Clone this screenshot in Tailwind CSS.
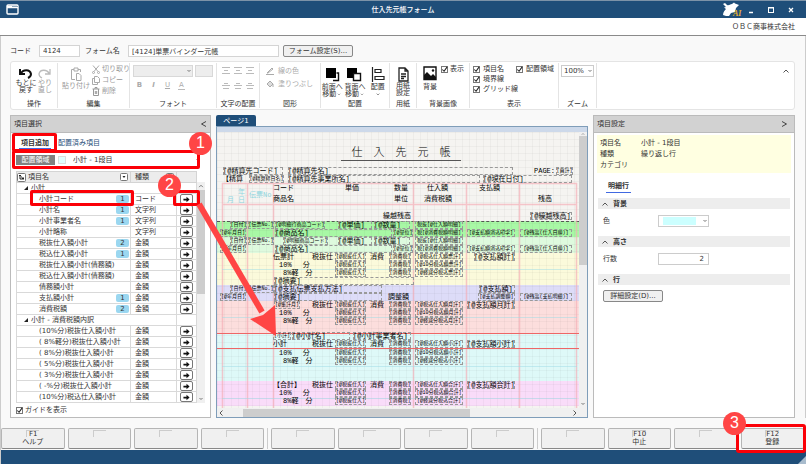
<!DOCTYPE html>
<html lang="ja">
<head>
    <meta charset="UTF-8">
    <meta name="viewport" content="width=device-width, initial-scale=1.0">
    <title>仕入先元帳フォーム</title>
    <script src="https://cdn.jsdelivr.net/npm/@tailwindcss/browser@4"></script>
</head>
<body class="min-h-screen relative flex flex-col overflow-hidden bg-[#f9f9f9] text-[#333] text-[7px] leading-[10px] font-['DejaVu_Sans','Noto_Sans_CJK_JP',sans-serif]">

<!-- icons -->
<svg class="hidden">
    <symbol id="chev" viewBox="0 0 8 8"><path d="M2.500 3l1.500 1.500L5.500 3" fill="none" stroke="#777" stroke-width="1"/></symbol>
    <symbol id="up" viewBox="0 0 8 8"><path d="M1.500 5.500L4 3l2.500 2.500" fill="none" stroke="#555" stroke-width="1"/></symbol>
    <symbol id="tick" viewBox="0 0 8 8"><path d="M1.500 4l2 2 3.500-5" fill="none" stroke="#222" stroke-width="1.200"/></symbol>
    <symbol id="arrow" viewBox="0 0 8 8"><path d="M0.500 3h3.500V0.800L7.500 4 4 7.200V5H0.500z" fill="#111"/></symbol>
    <symbol id="lines-c" viewBox="0 0 8 7"><path d="M0 .5h8M2 3.500h4M0 6.500h8" stroke="#bbb"/></symbol>
    <symbol id="lines-b" viewBox="0 0 8 7"><path d="M2 1.500h4M0 3.500h8M1 6.500h6" stroke="#bbb"/></symbol>
</svg>

<header>
    <div class="h-[18px] grid grid-cols-[1fr_auto_1fr] items-center bg-[#1f4e79] border-t border-[#7d93a8] text-white px-1.5">
        <svg class="w-[13px] h-[11px]" viewBox="0 0 13 11"><rect x="1" y="1" width="11" height="9" rx="1" fill="none" stroke="#fff" stroke-width="1.400"/><path d="M1 3h11" stroke="#fff" stroke-width="2.500"/><path d="M6.500 2.500h1M8.500 2.500h1M10.500 2.500h1" stroke="#1f4e79"/></svg>
        <h1 class="font-medium">仕入先元帳フォーム</h1>
        <div class="flex items-center justify-end gap-1.5 pr-0.5">
            <svg class="w-[20px] h-[15px]" viewBox="0 0 20 15"><path d="M1 13c0-3 2-5 3-6L2 5.500 4 5l-3-3 2-1 2 2c2 1 3-1 5-1l2-1.500 1 1 4 1.500-2 2-1 1-1 4-4 1-2 3-3 0z" fill="#fff"/><text x="11" y="14" font-size="8" font-style="italic" font-weight="bold" fill="#e8b030" font-family="Liberation Serif">AI</text></svg>
            <button class="w-[10px] h-3" aria-label="最小化"><svg viewBox="0 0 10 12"><path d="M1 8.500h4" stroke="#fff" stroke-width="1.500"/></svg></button>
            <button class="w-[14px] h-3 flex justify-center" aria-label="最大化"><svg class="w-[8px]" viewBox="0 0 8 12"><rect x="1.500" y="3.500" width="5" height="5" fill="none" stroke="#fff"/><path d="M1 4h6" stroke="#fff"/></svg></button>
            <button class="w-[14px] h-3 flex justify-center" aria-label="閉じる"><svg class="w-[8px]" viewBox="0 0 8 12"><path d="M2 4l4 4M6 4L2 8" stroke="#fff" stroke-width="1.300"/></svg></button>
        </div>
    </div>
    <div class="h-[18px] flex items-center justify-end bg-white border-b border-[#8a8a8a] pr-[11px]">ＯＢＣ商事株式会社</div>
</header>

<main class="flex-1 flex flex-col border-x border-[#ccc] pl-[9px] pr-[10px] pt-[9px]">
    <form class="flex items-center h-3 mb-1">
        <label for="code" class="w-[29px]">コード</label>
        <input id="code" value="4124" class="w-[41px] h-3 bg-white border border-[#d4d4d4] px-[3px]">
        <label for="form-name" class="w-[48px] pl-[5px]">フォーム名</label>
        <input id="form-name" value="[4124]単票バインダー元帳" class="w-[151px] h-3 bg-white border border-[#d4d4d4] px-[3px]">
        <button type="button" class="ml-1 w-[70px] h-3 leading-[9px] bg-[#f0f0f0] border border-[#888] rounded-[2px] whitespace-nowrap">フォーム設定(S)...</button>
    </form>

    <!-- ribbon -->
    <section class="flex bg-white border border-[#e4e4e4] rounded-[3px] h-[49px] mb-[5px] py-px text-center leading-[7px]">
        <div class="w-[47px] flex flex-col justify-between border-r border-[#e4e4e4] pt-1">
            <div class="flex justify-around px-1">
                <button class="flex flex-col items-center whitespace-nowrap"><svg class="w-[15px] h-[13px]" viewBox="0 0 15 13"><path d="M2 2v5h5M2.500 7C5 2 12 2 13 7c0 2-1 3-3 4" fill="none" stroke="#111" stroke-width="2"/></svg>もとに<br>戻す</button>
                <button class="flex flex-col items-center text-[#999]"><svg class="w-[15px] h-[13px]" viewBox="0 0 15 13"><path d="M13 2v5H8M12.500 7C10 2 3 2 2 7c0 2 1 3 3 4" fill="none" stroke="#bbb" stroke-width="1.300"/></svg>やり<br>直し</button>
            </div>
            <span>操作</span>
        </div>
        <div class="w-[72px] flex flex-col justify-between border-r border-[#e4e4e4] pt-px">
            <div class="flex px-1 gap-[2px] text-[#999]">
                <button class="flex flex-col items-center pt-[3px] whitespace-nowrap"><svg class="w-[12px] h-[14px] mb-[2px]" viewBox="0 0 12 14"><path d="M4 2.500H1.500v10H5M8 2.500h2.500V5M4 1h4v3H4zM6.500 6.500h2.500l2 2v5H6.500z" fill="none" stroke="#aaa"/></svg>貼り付け</button>
                <div class="flex flex-col gap-px">
                    <button class="flex items-center gap-[2px] h-[10px] whitespace-nowrap"><svg class="w-[8px] h-[9px]" viewBox="0 0 8 9"><path d="M1 .5l5 6M7 .5l-5 6" stroke="#aaa"/><circle cx="1.500" cy="7.500" r="1" fill="none" stroke="#aaa"/><circle cx="6.500" cy="7.500" r="1" fill="none" stroke="#aaa"/></svg>切り取り</button>
                    <button class="flex items-center gap-[2px] h-[10px]"><svg class="w-[8px] h-[9px]" viewBox="0 0 8 9"><path d="M2.500.5h3l2 2v4h-5zM2.500 2.500h-2v6h5v-2" fill="none" stroke="#aaa"/></svg>コピー</button>
                    <button class="flex items-center gap-[2px] h-[10px]"><svg class="w-[8px] h-[9px]" viewBox="0 0 8 9"><path d="M.5 2h7M3 2V.5h2V2M1.500 2v6.500h5V2M3.300 4v3M4.700 4v3" fill="none" stroke="#999"/></svg>削除</button>
                </div>
            </div>
            <span>編集</span>
        </div>
        <div class="w-[87px] flex flex-col justify-between border-r border-[#e4e4e4] pt-0.5">
            <div>
                <div class="flex gap-[2px] px-[3px]">
                    <div class="grid w-[61px] h-3">
                        <select aria-label="フォント" disabled class="col-start-1 row-start-1 appearance-none bg-[#ededed] border border-[#d8d8d8]"><option></option></select>
                        <svg class="col-start-1 row-start-1 w-2 h-2 self-center justify-self-end"><use href="#chev"/></svg>
                    </div>
                    <input aria-label="サイズ" disabled class="w-[18px] h-3 bg-[#ededed] border border-[#d8d8d8]">
                </div>
                <div class="flex gap-[7px] pl-[6px] pt-1 text-[#aaa]">
                    <button class="w-[7px] h-[9px] font-bold">B</button>
                    <button class="w-[7px] h-[9px] font-bold italic">I</button>
                    <button class="w-[7px] h-[9px] underline">U</button>
                    <button class="w-[7px] h-[9px] border-b border-[#bbb]">A</button>
                </div>
            </div>
            <span>フォント</span>
        </div>
        <div class="w-[43px] flex flex-col justify-between border-r border-[#e4e4e4] pt-1">
            <div class="grid grid-cols-3 justify-items-center gap-y-2 px-[3px]">
                <svg class="w-2 h-[7px]"><use href="#lines-c"/></svg><svg class="w-2 h-[7px]"><use href="#lines-c"/></svg><svg class="w-2 h-[7px]"><use href="#lines-c"/></svg>
                <svg class="w-2 h-[7px]"><use href="#lines-b"/></svg><svg class="w-2 h-[7px]"><use href="#lines-b"/></svg><svg class="w-2 h-[7px]"><use href="#lines-b"/></svg>
            </div>
            <span>文字の配置</span>
        </div>
        <div class="w-[61px] flex flex-col justify-between border-r border-[#e4e4e4] pt-[3px]">
            <div class="flex flex-col gap-[3px] pl-[6px] text-[#aaa]">
                <button class="flex items-center gap-1 h-[10px]"><svg class="w-2 h-2" viewBox="0 0 8 8"><path d="M1 6l5-5 1 1-5 4zM0 7.500h8" fill="none" stroke="#aaa"/></svg>線の色</button>
                <button class="flex items-center gap-1 h-[10px] whitespace-nowrap"><svg class="w-2 h-2" viewBox="0 0 8 8"><path d="M1 4l3-3 3 3-3 3zM7 4v3" fill="#ddd" stroke="#aaa"/></svg>塗りつぶし</button>
            </div>
            <span>図形</span>
        </div>
        <div class="w-[69px] flex flex-col justify-between border-r border-[#e4e4e4] pt-1">
            <div class="grid grid-cols-3">
                <button class="flex flex-col items-center whitespace-nowrap"><svg class="w-[15px] h-[15px] mb-[2px]" viewBox="0 0 15 15"><path d="M8 13.500h5.500V6h-2" fill="none" stroke="#111" stroke-width="1.400"/><path d="M1 1h10v10H1z" fill="#000"/></svg>前面へ<span class="flex">移動<svg class="w-[6px] h-[7px]"><use href="#chev"/></svg></span></button>
                <button class="flex flex-col items-center whitespace-nowrap"><svg class="w-[15px] h-[15px] mb-[2px]" viewBox="0 0 15 15"><path d="M0 1h10v10H0z" fill="#000"/><path d="M6.500 6.500h7v7h-7z" fill="#fff" stroke="#111" stroke-width="1.400"/></svg>背面へ<span class="flex">移動<svg class="w-[6px] h-[7px]"><use href="#chev"/></svg></span></button>
                <button class="flex flex-col items-center"><svg class="w-[14px] h-[15px] mb-[2px]" viewBox="0 0 14 15"><path d="M1.500 0v15M4 2.500h6v3H4zM4 9.500h9v3H4z" fill="none" stroke="#222" stroke-width="1.200"/></svg>配置<svg class="w-2 h-[7px]"><use href="#chev"/></svg></button>
            </div>
            <span>配置</span>
        </div>
        <div class="w-[27px] flex flex-col justify-between border-r border-[#e4e4e4] pt-1">
            <button class="flex flex-col items-center"><svg class="w-[11px] h-[15px] mb-px" viewBox="0 0 11 15"><path d="M1 1h6l3 3v10H1zM7 1v3h3M3 7h5M3 9.500h5M3 11.500h3" fill="none" stroke="#222" stroke-width="1.300"/></svg>用紙<br>設定</button>
            <span>用紙</span>
        </div>
        <div class="w-[53px] flex flex-col justify-between border-r border-[#e4e4e4] pt-[3px]">
            <div class="flex items-start gap-1 pl-[6px]">
                <button class="flex flex-col items-center"><svg class="w-[14px] h-[15px] mb-[3px]" viewBox="0 0 14 15"><path d="M1 1h12v12.500H1z" fill="#fff" stroke="#111" stroke-width="1.400"/><path d="M1 13V9l3-3 4 4 2-2 3 3v2z" fill="#111"/><circle cx="10" cy="4.500" r="1.200" fill="#111"/></svg>背景</button>
                <label class="flex items-center gap-[2px]"><span class="grid"><input type="checkbox" checked class="col-start-1 row-start-1 appearance-none w-[7px] h-[7px] border border-[#777]"><svg class="col-start-1 row-start-1 w-[7px] h-[7px] pointer-events-none"><use href="#tick"/></svg></span>表示</label>
            </div>
            <span>背景画像</span>
        </div>
        <div class="w-[89px] flex flex-col justify-between border-r border-[#e4e4e4] pt-[3px]">
            <div class="grid grid-cols-[43px_1fr] gap-y-[3px] pl-[3px] whitespace-nowrap">
                <label class="flex items-center gap-[3px]"><span class="grid"><input type="checkbox" checked class="col-start-1 row-start-1 appearance-none w-[7px] h-[7px] border border-[#777]"><svg class="col-start-1 row-start-1 w-[7px] h-[7px] pointer-events-none"><use href="#tick"/></svg></span>項目名</label>
                <label class="flex items-center gap-[3px]"><span class="grid"><input type="checkbox" checked class="col-start-1 row-start-1 appearance-none w-[7px] h-[7px] border border-[#777]"><svg class="col-start-1 row-start-1 w-[7px] h-[7px] pointer-events-none"><use href="#tick"/></svg></span>配置領域</label>
                <label class="col-span-2 flex items-center gap-[3px]"><span class="grid"><input type="checkbox" checked class="col-start-1 row-start-1 appearance-none w-[7px] h-[7px] border border-[#777]"><svg class="col-start-1 row-start-1 w-[7px] h-[7px] pointer-events-none"><use href="#tick"/></svg></span>境界線</label>
                <label class="col-span-2 flex items-center gap-[3px]"><span class="grid"><input type="checkbox" checked class="col-start-1 row-start-1 appearance-none w-[7px] h-[7px] border border-[#777]"><svg class="col-start-1 row-start-1 w-[7px] h-[7px] pointer-events-none"><use href="#tick"/></svg></span>グリッド線</label>
            </div>
            <span>表示</span>
        </div>
        <div class="w-[38px] flex flex-col justify-between border-r border-[#e4e4e4] pt-0.5">
            <div class="grid mx-0.5 h-3">
                <select aria-label="ズーム" class="col-start-1 row-start-1 appearance-none bg-white border border-[#ccc] px-[2px]"><option>100%</option></select>
                <svg class="col-start-1 row-start-1 w-2 h-2 self-center justify-self-end pointer-events-none"><use href="#chev"/></svg>
            </div>
            <span>ズーム</span>
        </div>
        <button class="ml-auto mr-1 mt-1 w-2 h-2" aria-label="折りたたむ"><svg class="w-2 h-2"><use href="#up"/></svg></button>
    </section>

    <div class="flex-1 flex gap-[5px]">
        <!-- item selection -->
        <section class="w-[201px] flex flex-col bg-white border border-[#bbb]">
            <h2 class="h-[17px] flex items-center justify-between bg-[#d2d2d2] border-b border-[#bbb] px-[3px]">項目選択
                <svg class="w-[7px] h-2" viewBox="0 0 7 8"><path d="M6 1.500L1.500 4 6 6.500" fill="none" stroke="#444"/></svg>
            </h2>
            <nav class="flex gap-[7px] pl-2 pt-[5px] h-[21px]">
                <a href="#" class="h-[11px] px-0.5 font-bold border-b border-[#4169e1]">項目追加</a>
                <a href="#" class="text-[#1f4e79]">配置済み項目</a>
            </nav>
            <div class="flex items-center h-[11px] pl-[5px] pr-1 mb-[6px]">
                <label for="area" class="w-[39px] h-[10px] bg-[#808080] text-white text-center">配置領域</label>
                <span class="w-2 h-2 mx-[3px] bg-[#e0ffff] border border-[#ddd]"></span>
                <div class="grid flex-1 h-[11px]">
                    <select id="area" class="col-start-1 row-start-1 appearance-none bg-white pl-1"><option>小計 - 1段目</option></select>
                    <svg class="col-start-1 row-start-1 w-2 h-2 self-center justify-self-end mr-1 pointer-events-none"><use href="#chev"/></svg>
                </div>
            </div>
            <div class="flex ml-[5px] mr-[6px]">
                <table class="w-[180px] table-fixed border-collapse">
                    <thead>
                        <tr class="h-[11px] bg-[#ececec] border border-[#d4d4d4]">
                            <th class="w-[114px] font-normal text-left border-r border-[#d4d4d4] p-0">
                                <div class="flex items-center gap-0.5 pr-[2px] h-[10px]"><svg class="w-[9px] h-[9px]" viewBox="0 0 9 9"><rect x=".5" y=".5" width="8" height="8" rx="1" fill="#fff" stroke="#777"/><path d="M2 2.500h2M3 2.500V6h2M4 4h1" fill="none" stroke="#222"/><path d="M5 4.500h2v2H5z" fill="#222"/></svg>項目名<button class="ml-auto" aria-label="絞り込み"><svg class="w-2 h-2" viewBox="0 0 8 8"><rect x=".5" y=".5" width="7" height="7" rx="1" fill="#fff" stroke="#777"/><path d="M2.500 3h3L4 5z" fill="#222"/></svg></button></div>
                            </th>
                            <th class="w-[46px] font-normal text-left border-r border-[#d4d4d4] p-0"><div class="flex items-center pl-1 pr-[2px] h-[10px]">種類<button class="ml-auto" aria-label="絞り込み"><svg class="w-2 h-2" viewBox="0 0 8 8"><rect x=".5" y=".5" width="7" height="7" rx="1" fill="#fff" stroke="#777"/><path d="M2.500 3h3L4 5z" fill="#222"/></svg></button></div></th>
                            <th class="w-[20px] p-0"></th>
                        </tr>
                    </thead>
                    <tbody id="items"></tbody>
                </table>
                <div class="w-2 flex flex-col items-center bg-[#f0f0f0] mt-[11px]">
                    <svg class="w-[6px] h-[8px]"><use href="#up"/></svg>
                    <span class="w-full h-[104px] bg-[#cdcdcd]"></span>
                    <svg class="w-2 h-2 mt-auto"><use href="#chev"/></svg>
                </div>
            </div>
            <label class="flex items-center gap-[2px] pl-[5px] pt-0.5"><span class="grid"><input type="checkbox" checked class="col-start-1 row-start-1 appearance-none w-[7px] h-[7px] border border-[#777]"><svg class="col-start-1 row-start-1 w-[7px] h-[7px] pointer-events-none"><use href="#tick"/></svg></span>ガイドを表示</label>
        </section>

        <!-- form designer -->
        <section class="flex-1 min-w-0 flex flex-col">
            <button class="w-[40px] h-[11px] bg-[#1f4e79] text-white rounded-t-[2px]">ページ1</button>
            <div class="flex-1 flex flex-col bg-[#cdd9ea] border border-[#7f9db9] pt-[5px]">
                <div class="flex-1 flex">
                    <div id="paper" class="relative flex-1 overflow-hidden bg-[#f5f4f1] text-black leading-[8px] whitespace-nowrap font-['Liberation_Mono','Noto_Sans_CJK_JP',monospace]">
                        <div class="absolute inset-x-0 top-[89px] h-[16px] bg-[#a8f8a5] border-t border-dashed border-[#555]"></div>
                        <div class="absolute inset-x-0 top-[105px] h-[16px] bg-[#defade]"></div>
                        <div class="absolute inset-x-0 top-[121px] h-[32px] bg-[#fbfadb]"></div>
                        <div class="absolute inset-x-0 top-[153px] h-[16px] bg-[#dddcf8]"></div>
                        <div class="absolute inset-x-0 top-[169px] h-[32px] bg-[#fcdedd]"></div>
                        <div class="absolute inset-x-0 top-[201px] h-[48px] bg-[#def9f8]"></div>
                        <div class="absolute inset-x-0 top-[249px] h-[25px] bg-[#f9dcf9]"></div>
                        <div class="absolute inset-0 bg-[linear-gradient(to_right,#00000008_1px,transparent_1px),linear-gradient(#00000008_1px,transparent_1px)] bg-[size:7px_7px]"></div>
                        <svg class="absolute inset-0 w-full h-full">
                            <path d="M5.500 51v225M30.500 51v225M56.500 51v225M196.500 51v225M249.500 51v225M302.500 51v225M359.500 51v225M5 51.500h355M5 72.500h355" stroke="#f4aab4" stroke-opacity=".65" stroke-width="1.500"/>
                            <path d="M5 137.500h355M5 185.500h355M5 234.500h355M5 266.500h355" stroke="#9edbe6" stroke-opacity=".5"/>
                            <path d="M0 201.500h363M0 216.500h363" stroke="#ee6666"/>
                        </svg>
                        <h3 class="absolute left-[124px] top-[15px] w-[120px] h-[14px] leading-[13px] text-center text-[11px] font-light border-b border-[#555]">仕　入　先　元　帳</h3>
                    </div>
                    <div class="w-2 flex flex-col items-center bg-[#f0f0f0]">
                        <svg class="w-[6px] h-[4px]"><use href="#up"/></svg>
                        <span class="w-full h-[129px] bg-[#cdcdcd]"></span>
                        <svg class="w-2 h-2 mt-auto"><use href="#chev"/></svg>
                    </div>
                </div>
                <div class="h-[9px] flex items-center justify-between bg-[#f0f0f0] pr-2">
                    <svg class="w-2 h-2 -rotate-90"><use href="#up"/></svg>
                    <span class="w-[227px] h-[8px] ml-[18px] mr-auto bg-[#cdcdcd]"></span>
                    <svg class="w-2 h-2 rotate-90"><use href="#up"/></svg>
                </div>
            </div>
        </section>

        <!-- item settings -->
        <section class="w-[202px] bg-white border border-[#bbb]">
            <h2 class="h-[17px] flex items-center justify-between bg-[#d2d2d2] border-b border-[#bbb] pl-[3px] pr-[6px]">項目設定
                <svg class="w-[7px] h-2" viewBox="0 0 7 8"><path d="M1 1.500L5.500 4 1 6.500" fill="none" stroke="#444"/></svg>
            </h2>
            <dl class="grid grid-cols-[41px_1fr] leading-[11px] bg-[#ffffe1] mx-[3px] mt-0.5 px-[3px] pt-[3px] pb-0.5">
                <dt>項目名</dt><dd>小計 - 1段目</dd>
                <dt>種類</dt><dd>繰り返し行</dd>
                <dt>カテゴリ</dt><dd></dd>
            </dl>
            <nav class="flex pl-3 pt-[8px] pb-[5px]"><a href="#" class="h-[12px] px-0.5 font-bold border-b border-[#4169e1]">明細行</a></nav>
            <h3 class="flex items-center gap-1 h-[11px] bg-[#ededed] mx-1 pl-[3px] font-bold"><svg class="w-2 h-2"><use href="#up"/></svg>背景</h3>
            <div class="flex items-center h-[27px] pl-[9px] pb-[4px]">
                <label for="color" class="w-[55px]">色</label>
                <div class="grid w-[51px] h-3">
                    <select id="color" class="col-start-1 row-start-1 appearance-none bg-white border border-[#ccc]"><option></option></select>
                    <span class="col-start-1 row-start-1 w-[33px] h-2 self-center ml-[5px] bg-[#ccffff] pointer-events-none"></span>
                    <svg class="col-start-1 row-start-1 w-2 h-2 self-center justify-self-end pointer-events-none"><use href="#chev"/></svg>
                </div>
            </div>
            <h3 class="flex items-center gap-1 h-[11px] bg-[#ededed] mx-1 pl-[3px] font-bold"><svg class="w-2 h-2"><use href="#up"/></svg>高さ</h3>
            <div class="flex items-center h-[27px] pl-[9px] pb-[4px]">
                <label for="rows" class="w-[55px]">行数</label>
                <input id="rows" value="2" class="w-[51px] h-3 bg-white border border-[#ccc] text-right pr-1">
            </div>
            <h3 class="flex items-center gap-1 h-[11px] bg-[#ededed] mx-1 pl-[3px] font-bold"><svg class="w-2 h-2"><use href="#up"/></svg>行</h3>
            <button class="ml-[9px] mt-[5px] block w-[60px] h-3 leading-[9px] bg-[#f0f0f0] border border-[#888] rounded-[2px] whitespace-nowrap">詳細設定(D)...</button>
        </section>
    </div>
</main>

<footer class="border-l border-[#ccc]">
    <div id="keys" class="flex gap-[3px] pt-[10px] pb-px pr-0.5"></div>
    <div class="h-[14px] flex items-end justify-end bg-[#1f4e79]"><svg class="w-2 h-2" viewBox="0 0 8 8"><path d="M8 0v8H0z" fill="#a9bccd"/></svg></div>
</footer>

<!-- guide callouts -->
<div class="absolute inset-0 pointer-events-none text-white text-[16px] leading-[22px] text-center font-['Liberation_Sans',sans-serif]">
    <div class="absolute left-[12px] top-[133px] w-[45px] h-[19px] border-3 border-[#fb0007] rounded-[2px]"></div>
    <div class="absolute left-[12px] top-[150px] w-[188px] h-[19px] border-3 border-[#fb0007] rounded-[2px]"></div>
    <div class="absolute left-[30px] top-[190px] w-[104px] h-[16px] border-3 border-[#fb0007] rounded-[2px]"></div>
    <div class="absolute left-[173px] top-[190px] w-[27px] h-[16px] border-3 border-[#fb0007] rounded-[2px]"></div>
    <div class="absolute right-0 bottom-[11px] w-[70px] h-[29px] border-3 border-[#fb0007] rounded-[3px]"></div>
    <svg class="absolute left-0 top-0 w-[290px] h-[345px]"><path d="M199 204l63 108" stroke="#ff4545" stroke-width="6"/><path d="M276 336l-26-17 13-4 12-10z" fill="#ff4545"/></svg>
    <span class="absolute left-[189px] top-[132px] w-[23px] h-[23px] rounded-full bg-[#ff4545]">1</span>
    <span class="absolute left-[158px] top-[174px] w-[23px] h-[23px] rounded-full bg-[#ff4545]">2</span>
    <span class="absolute right-[60px] bottom-[29px] w-[23px] h-[23px] rounded-full bg-[#ff4545]">3</span>
</div>

<script>
    // [name, type, count]; a row without a type is a group heading
    const items = [
        ['小計'],
        ['小計コード', 'コード', 1], ['小計名', '文字列', 1], ['小計事業者名', '文字列', 1], ['小計略称', '文字列'],
        ['税抜仕入額小計', '金額', 2], ['税込仕入額小計', '金額', 1], ['税抜仕入額小計(債務額)', '金額'], ['税込仕入額小計(債務額)', '金額'],
        ['債務額小計', '金額'], ['支払額小計', '金額', 1], ['消費税額', '金額', 2],
        ['小計 - 消費税額内訳'],
        ['(10%分)税抜仕入額小計', '金額'], ['( 8%軽分)税抜仕入額小計', '金額'], ['( 8%分)税抜仕入額小計', '金額'], ['( 5%分)税抜仕入額小計', '金額'],
        ['( 3%分)税抜仕入額小計', '金額'], ['( -%分)税抜仕入額小計', '金額'], ['(10%分)税込仕入額小計', '金額'],
    ];
    document.getElementById('items').innerHTML = items.map(([name, type, count]) => type ? `
        <tr class="h-[11px] border border-[#d9d9d9]">
            <td class="border-r border-[#d9d9d9] p-0"><div class="flex items-center h-[10px] pl-[22px] pr-px whitespace-nowrap">${name}${count ? `<span class="ml-auto w-[13px] h-2 leading-[8px] rounded-[2px] bg-[#9bd7f0] text-center">${count}</span>` : ''}</div></td>
            <td class="border-r border-[#d9d9d9] p-0 pl-1">${type}</td>
            <td class="p-0"><button class="mx-auto flex w-[13px] h-[10px] items-center justify-center bg-white border border-[#777] rounded-[2px]" aria-label="追加"><svg class="w-[7px] h-[7px]"><use href="#arrow"/></svg></button></td>
        </tr>` : `
        <tr class="h-[11px] border border-[#d9d9d9]">
            <td colspan="2" class="border-r border-[#d9d9d9] p-0"><div class="flex items-center gap-[3px] h-[10px] pl-[7px]"><svg class="w-1 h-1" viewBox="0 0 4 4"><path d="M4 0v4H0z" fill="#222"/></svg>${name}</div></td>
            <td class="p-0"></td>
        </tr>`).join('');

    // fixed labels: [x, y, text]
    const labels = [
        [5, 43, '【精算'], [317, 35, 'PAGE:'], [56, 52, 'コード'], [128, 52, '単価'], [177, 52, '数量'], [210, 52, '仕入額'], [262, 52, '支払額'],
        [56, 63, '商品名'], [177, 63, '単位'], [207, 63, '消費税額'], [321, 63, '残高'], [166, 80, '繰越残高'],
        [56, 121, '伝票計'], [62, 129, '10%　 分'], [66, 137, '8%軽　分'], [95, 121, '税抜仕'], [153, 121, '消費'],
        [171, 161, '調整額'], [95, 169, '税抜仕'], [153, 169, '消費'], [62, 177, '10%　 分'], [66, 185, '8%軽　分'],
        [56, 208, '小計'], [95, 208, '税抜仕'], [153, 208, '消費'], [62, 217, '10%　 分'], [66, 225, '8%軽　分'],
        [56, 249, '【合計】'], [95, 249, '税抜仕'], [153, 249, '消費'], [62, 257, '10%　 分'], [66, 265, '8%軽　分'],
    ];
    const guides = [[21, 56, '年'], [10, 64, '月'], [21, 64, '日'], [32, 59, '伝票No']];
    // placed fields: [x, y, width, text]
    const fields = [
        [6, 35, 60, '[@精算先コード]'], [71, 35, 225, '[@精算先名]'], [71, 43, 192, '[@精算先事業所名]'], [266, 43, 89, '[@現在日付]'],
        [313, 80, 42, '[@繰越残高]'],
        [121, 89, 34, '[@単価]'], [157, 89, 36, '[@数量]'], [58, 97, 117, '[@商品名]'],
        [121, 105, 34, '[@単価]'], [157, 105, 36, '[@数量]'], [58, 113, 117, '[@商品名]'],
        [257, 121, 41, '[@支払額計]'], [57, 145, 140, '[@摘要]'],
        [57, 153, 108, '[@支払伝票支払方法]'], [57, 161, 108, '[@摘要]'], [262, 153, 36, '[@支払額]'],
        [250, 169, 48, '[@支払額月計]'], [250, 208, 48, '[@支払額小計]'], [250, 249, 48, '[@支払額合計]'],
        [75, 200, 58, '[@小計名]'], [136, 200, 58, '[@小計事業者名]'],
    ];
    const smallFields = [
        [32, 43, 35, '[@精算締日名]'], [339, 35, 17, '[頁計]'],
        [13, 89, 17, '[日付]'], [31, 89, 26, '[伝票No.]'], [58, 89, 50, '[@明細行商品コード]'],
        [3, 97, 26, '[@年月日]'], [3, 113, 26, '[@年月日]'],
        [13, 105, 17, '[日付]'], [31, 105, 26, '[伝票No.]'], [66, 105, 45, '[@明細商品コード]'],
        [176, 97, 20, '[@単位]'], [176, 113, 20, '[@単位]'],
        [13, 153, 17, '[日付]'], [31, 153, 26, '[伝票No.]'], [3, 161, 26, '[@年月日]'],
        [198, 89, 48, '税抜[@仕入額明細]'], [198, 97, 48, '税[@消費税額明細]'], [250, 97, 48, '[@支払額消込印字]'], [303, 97, 52, '[@残高(仕入日順)]'],
        [198, 105, 48, '税抜[@仕入額明細]'], [198, 113, 48, '税[@消費税額明細]'], [250, 113, 48, '[@支払額消込印字]'], [303, 113, 52, '[@残高(仕入日順)]'],
        [261, 161, 37, '[@支払調整額]'], [303, 161, 52, '[@残高(支払明細)]'],
        [57, 169, 26, '[@集計月]'], [56, 200, 18, '[小計]'],
    ];
    // each total block repeats over three rows
    [[121, 129, '票計'], [169, 177, '月計'], [208, 217, '小計'], [249, 257, '合計']].forEach(([first, second, total]) => {
        [first, second, second + 8].forEach((y, i) => {
            smallFields.push([118, y, 31, '[@税抜仕入]'], [172, y, 22, '[消費税]'], [198, y, 48, ['[@税込仕入額', '[@10分税込額', '[@軽減分税込'][i] + total + ']']);
        });
    });
    document.getElementById('paper').insertAdjacentHTML('beforeend',
        labels.map(([x, y, t]) => `<span class="absolute" style="left:${x}px;top:${y}px">${t}</span>`).join('') +
        guides.map(([x, y, t]) => `<span class="absolute text-[#8fd6df]" style="left:${x}px;top:${y}px">${t}</span>`).join('') +
        fields.map(([x, y, w, t]) => `<span class="absolute h-[8px] outline-1 -outline-offset-1 outline-dashed outline-[#999]" style="left:${x}px;top:${y}px;width:${w}px">${t}</span>`).join('') +
        smallFields.map(([x, y, w, t]) => `<span class="absolute h-[8px] text-[5px] text-center outline-1 -outline-offset-1 outline-dashed outline-[#999]" style="left:${x}px;top:${y}px;width:${w}px">${t}</span>`).join(''));

    // function keys, in three groups of four
    const keys = [['F1', 'ヘルプ'], [], [], [], [], [], [], [], [], ['F10', '中止'], [], ['F12', '登録']];
    document.getElementById('keys').innerHTML = keys.map(([key = '', name = ''], i) =>
        (i === 4 || i === 8 ? '<span class="w-px bg-[#ccc]"></span>' : '') +
        `<button class="flex-1 h-[21px] flex flex-col items-center bg-[#f0f0f0] border border-[#b5b5b5] border-b-[#888] rounded-[2px] pt-px leading-[8px]"><span class="min-w-[13px] h-[7px] leading-[7px] border-t border-l border-[#ccc] mb-px">${key}</span>${name}</button>`).join('');
</script>
</body>
</html>
